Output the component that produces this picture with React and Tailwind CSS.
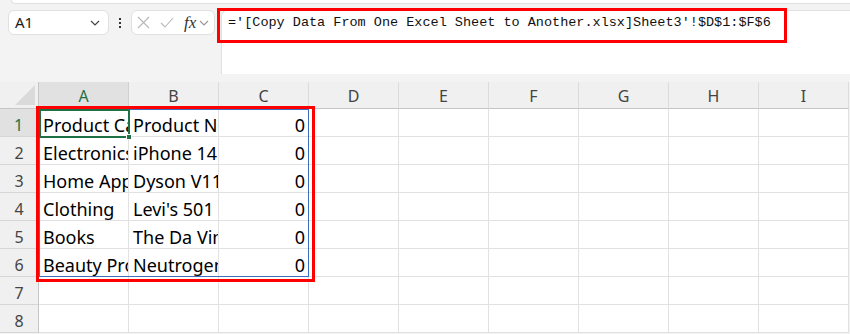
import React from 'react';

const cols = ['A', 'B', 'C', 'D', 'E', 'F', 'G', 'H', 'I'];

const rows = [
    ['Product Category', 'Product Name', '0'],
    ['Electronics', 'iPhone 14', '0'],
    ['Home Appliances', 'Dyson V11', '0'],
    ['Clothing', "Levi's 501", '0'],
    ['Books', 'The Da Vinci Code', '0'],
    ['Beauty Products', 'Neutrogena', '0'],
    [],
    [],
];

const formula = "='[Copy Data From One Excel Sheet to Another.xlsx]Sheet3'!$D$1:$F$6";

const Chevron = ({ className }) => (
    <svg className={className} width="10" height="6" viewBox="0 0 10 6" fill="none">
        <path d="M1 1l4 4 4-4" stroke="currentColor" strokeWidth="1.2" />
    </svg>
);

const FormulaBar = () => (
    <div className="flex items-start pt-[6px] h-[78px]">
        {/* name box */}
        <div className="ml-[8px] w-[101px] h-[25px] bg-white border border-[#e0e0e0] rounded-md flex items-center justify-between pl-[6px] pr-[8px]">
            <span className="text-[15px] text-[#1a1a1a]">A1</span>
            <Chevron className="text-[#444]" />
        </div>
        <div className="w-[22px] h-[25px] flex flex-col items-center justify-center gap-[2px]">
            <span className="w-[2px] h-[2px] bg-[#333]"></span>
            <span className="w-[2px] h-[2px] bg-[#333]"></span>
            <span className="w-[2px] h-[2px] bg-[#333]"></span>
        </div>
        {/* cancel / enter / fx */}
        <div className="w-[84px] h-[25px] bg-white border border-[#e0e0e0] rounded-md flex items-center pl-[5px]">
            <svg width="13" height="13" viewBox="0 0 13 13" fill="none">
                <path d="M1 1l11 11M12 1L1 12" stroke="#b8b8b8" strokeWidth="1.1" />
            </svg>
            <svg className="ml-[10px]" width="14" height="11" viewBox="0 0 14 11" fill="none">
                <path d="M1 6l4 4 8-9" stroke="#b8b8b8" strokeWidth="1.1" />
            </svg>
            <span className="ml-[10px] text-[17px] italic leading-none text-[#333] font-['Liberation_Serif',serif]">fx</span>
            <Chevron className="ml-[3px] text-[#999]" />
        </div>
        {/* formula input */}
        <div className="relative ml-[6px] flex-1 h-[64px] bg-white border-t border-l border-[#e0e0e0] rounded-tl-md pl-[6px] pt-[2px]">
            <div className="text-[13.5px] leading-[20px] text-[#111] font-['Liberation_Mono',monospace] whitespace-pre">{formula}</div>
            <div className="absolute left-[-5px] top-[-3px] w-[570px] h-[35px] border-[3px] border-[#ff0000]"></div>
        </div>
    </div>
);

const Grid = () => (
    <div className="relative">
        <div className="grid grid-cols-[39px_repeat(9,90px)] grid-rows-[27px_repeat(8,28px)]">
            {/* select all corner */}
            <div className="relative bg-[#f0f0f0] border-r border-b border-[#c6c6c6]">
                <div className="absolute right-[3px] bottom-[3px] w-0 h-0 border-l-[20px] border-l-transparent border-b-[20px] border-b-[#dadada]"></div>
            </div>
            {cols.map((c) => (
                <div
                    key={c}
                    className={
                        c === 'A'
                            ? 'flex items-center justify-center pt-[2px] bg-[#e1e1e1] border-r border-r-[#d0d0d0] border-b-2 border-b-[#1e7145] text-[#1e7145] text-[16px]'
                            : 'flex items-center justify-center pt-[2px] bg-[#f0f0f0] border-r border-r-[#dcdcdc] border-b border-b-[#c6c6c6] text-[#444] text-[16px]'
                    }
                >
                    {c}
                </div>
            ))}
            {rows.map((r, i) => (
                <React.Fragment key={i}>
                    <div
                        className={
                            i === 0
                                ? 'flex items-center justify-center pt-[4px] bg-[#e1e1e1] border-r-2 border-r-[#1e7145] border-b border-b-[#d6d6d6] text-[#1e7145] text-[16px]'
                                : 'flex items-center justify-center pt-[4px] bg-[#f0f0f0] border-r border-r-[#c6c6c6] border-b border-b-[#d6d6d6] text-[#444] text-[16px]'
                        }
                    >
                        {i + 1}
                    </div>
                    {cols.map((c, j) => (
                        <div
                            key={c}
                            className={
                                j === 2
                                    ? 'bg-white border-r border-b border-[#e1e1e1] overflow-hidden whitespace-nowrap text-right pr-[3px] text-[18px] leading-[32px] text-black'
                                    : 'bg-white border-r border-b border-[#e1e1e1] overflow-hidden whitespace-nowrap pl-[4px] text-[18px] leading-[32px] text-black'
                            }
                        >
                            {r[j] || ''}
                        </div>
                    ))}
                </React.Fragment>
            ))}
        </div>
        {/* spill range border */}
        <div className="absolute left-[39px] top-[27px] w-[270px] h-[168px] border border-[#3a6fc4]"></div>
        {/* active cell */}
        <div className="absolute left-[39px] top-[27px] w-[91px] h-[29px] border-2 border-[#1e7145]"></div>
        <div className="absolute left-[126px] top-[52px] w-[6px] h-[6px] bg-[#1e7145] border border-white"></div>
        {/* highlight box */}
        <div className="absolute left-[36px] top-[24px] w-[279px] h-[176px] border-[3px] border-[#ff0000]"></div>
    </div>
);

export default function App() {
    return (
        <div className="w-[850px] h-[334px] overflow-hidden bg-[#f3f3f3] font-['Noto_Sans',sans-serif]">
            <div className="ml-[11px] h-[4px] bg-white border-l border-b border-[#e0e0e0] rounded-bl-md"></div>
            <FormulaBar />
            <Grid />
        </div>
    );
}
